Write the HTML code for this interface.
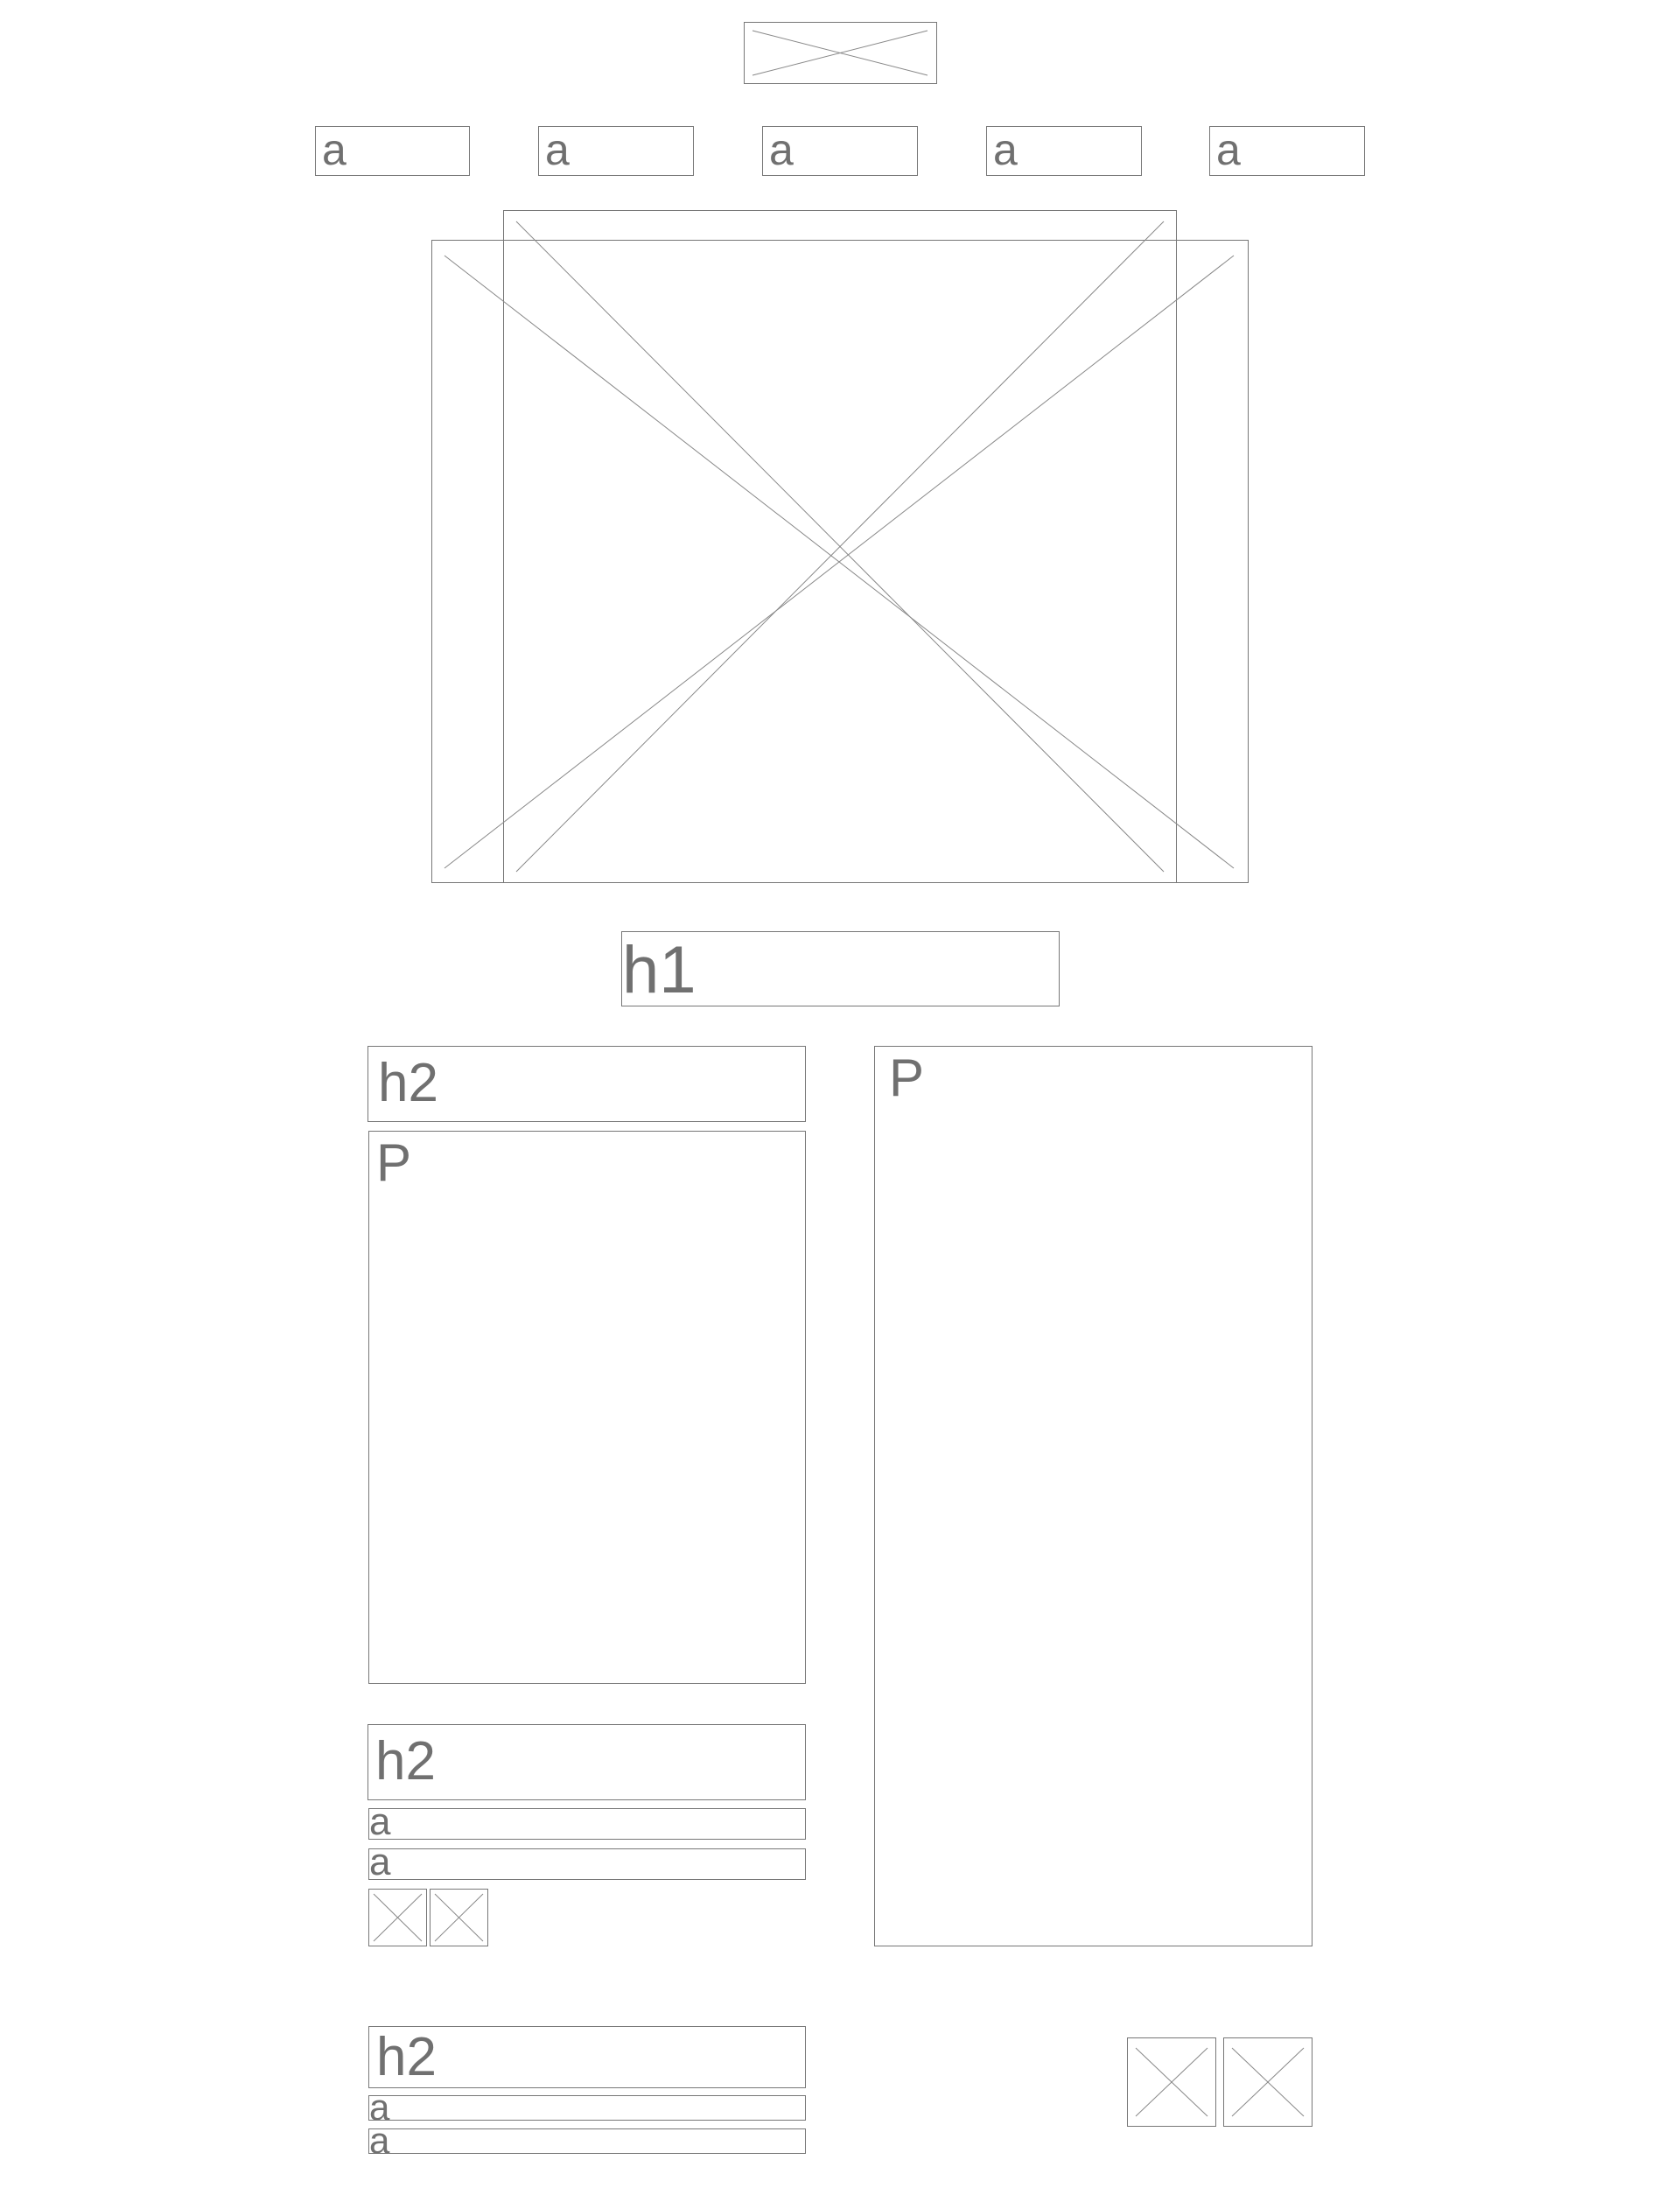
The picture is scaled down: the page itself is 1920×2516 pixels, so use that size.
<!DOCTYPE html>
<html><head><meta charset="utf-8"><style>
body{margin:0;width:1920px;height:2516px;background:#fff;position:relative;overflow:hidden;font-family:"Liberation Sans",sans-serif;color:#707070}
.b{position:absolute;border:1.5px solid #777;box-sizing:border-box;line-height:1}
svg{position:absolute;left:0;top:0}
</style></head><body>
<svg width="1920" height="2516" fill="none" stroke="#888" stroke-width="1">
<rect x="850.5" y="25.5" width="220" height="70" stroke="#777"/>
<line x1="860" y1="35" x2="1060" y2="86"/><line x1="860" y1="86" x2="1060" y2="35"/>
<rect x="575.5" y="240.5" width="769" height="768" stroke="#777"/>
<rect x="493.5" y="274.5" width="933" height="734" stroke="#777"/>
<line x1="590" y1="253" x2="1330" y2="996"/><line x1="1330" y1="253" x2="590" y2="996"/>
<line x1="508" y1="292" x2="1410" y2="992"/><line x1="1410" y1="292" x2="508" y2="992"/>
<rect x="421.5" y="2158.5" width="66" height="65" stroke="#777"/>
<line x1="427" y1="2164" x2="482" y2="2218"/><line x1="482" y1="2164" x2="427" y2="2218"/>
<rect x="491.5" y="2158.5" width="66" height="65" stroke="#777"/>
<line x1="497" y1="2164" x2="552" y2="2218"/><line x1="552" y1="2164" x2="497" y2="2218"/>
<rect x="1288.5" y="2328.5" width="101" height="101" stroke="#777"/>
<line x1="1298" y1="2340" x2="1380" y2="2418"/><line x1="1380" y1="2340" x2="1298" y2="2418"/>
<rect x="1398.5" y="2328.5" width="101" height="101" stroke="#777"/>
<line x1="1408" y1="2340" x2="1490" y2="2418"/><line x1="1490" y1="2340" x2="1408" y2="2418"/>
</svg>

<div class="b" style="left:360px;top:144px;width:177px;height:57px;font-size:50px;padding:1px 0 0 7px">a</div>
<div class="b" style="left:615px;top:144px;width:178px;height:57px;font-size:50px;padding:1px 0 0 7px">a</div>
<div class="b" style="left:871px;top:144px;width:178px;height:57px;font-size:50px;padding:1px 0 0 7px">a</div>
<div class="b" style="left:1127px;top:144px;width:178px;height:57px;font-size:50px;padding:1px 0 0 7px">a</div>
<div class="b" style="left:1382px;top:144px;width:178px;height:57px;font-size:50px;padding:1px 0 0 7px">a</div>

<div class="b" style="left:710px;top:1064px;width:501px;height:86px;font-size:76px;padding:6px 0 0 0">h1</div>

<div class="b" style="left:420px;top:1195px;width:501px;height:87px;font-size:62px;padding:11px 0 0 11px">h2</div>
<div class="b" style="left:421px;top:1292px;width:500px;height:632px;font-size:60px;padding:6px 0 0 8px">P</div>
<div class="b" style="left:999px;top:1195px;width:501px;height:1029px;font-size:60px;padding:6px 0 0 16px">P</div>

<div class="b" style="left:420px;top:1970px;width:501px;height:87px;font-size:62px;padding:11px 0 0 8px">h2</div>
<div class="b" style="left:421px;top:2066px;width:500px;height:36px;font-size:44px;padding:0;line-height:30px">a</div>
<div class="b" style="left:421px;top:2112px;width:500px;height:36px;font-size:44px;padding:0;line-height:30px">a</div>

<div class="b" style="left:421px;top:2315px;width:500px;height:71px;font-size:62px;padding:4px 0 0 8px">h2</div>
<div class="b" style="left:421px;top:2394px;width:500px;height:29px;font-size:42px;line-height:25px">a</div>
<div class="b" style="left:421px;top:2432px;width:500px;height:29px;font-size:42px;line-height:25px">a</div>
</body></html>
